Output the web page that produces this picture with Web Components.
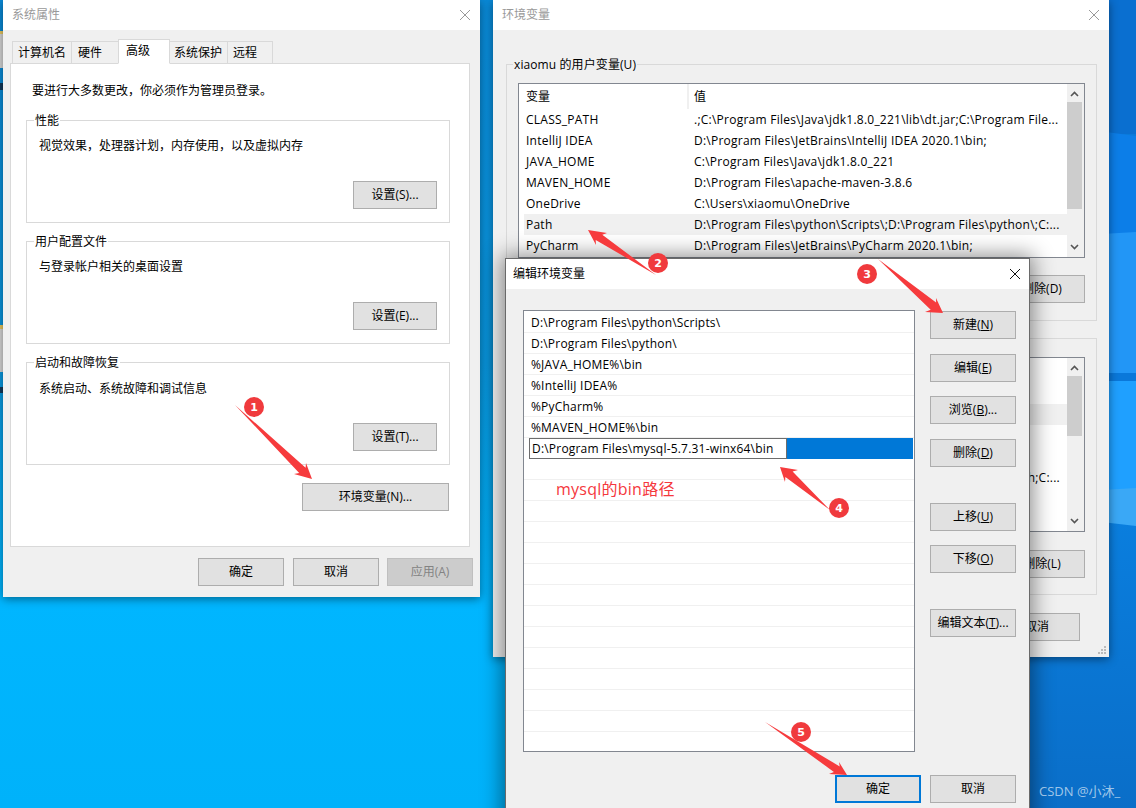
<!DOCTYPE html>
<html lang="zh">
<head>
<meta charset="utf-8">
<title>环境变量</title>
<style>
html,body{margin:0;padding:0;overflow:hidden;width:1136px;height:808px}
body{font:12px/16px "Open Sans","Noto Sans CJK SC",sans-serif;color:#000}
</style>
</head>
<body>
<desk-top>
  <win-dialog x="3" y="0" w="477" h="597" title="系统属性" style="--title:#999">
    <tab-strip></tab-strip>
    <tab-panel>
      <div style="padding:0 0 0 21px;height:16px">要进行大多数更改，你必须作为管理员登录。</div>
      <group-box label="性能" style="--h:103px;--bg:#fff;margin-top:21px;width:424px;margin-left:15px">
        <div class="t">视觉效果，处理器计划，内存使用，以及虚拟内存</div>
        <ui-btn style="--w:84px">设置(S)...</ui-btn>
      </group-box>
      <group-box label="用户配置文件" style="--h:103px;--bg:#fff;margin-top:18px;width:424px;margin-left:15px">
        <div class="t">与登录帐户相关的桌面设置</div>
        <ui-btn style="--w:84px">设置(E)...</ui-btn>
      </group-box>
      <group-box label="启动和故障恢复" style="--h:103px;--bg:#fff;margin-top:18px;width:424px;margin-left:15px">
        <div class="t" style="margin-top:1px">系统启动、系统故障和调试信息</div>
        <ui-btn style="--w:84px">设置(T)...</ui-btn>
      </group-box>
      <btn-row style="margin:18px 20px 0 0"><ui-btn style="--w:147px">环境变量(N)...</ui-btn></btn-row>
    </tab-panel>
    <btn-row style="margin:11px 7px 0 0;gap:9px">
      <ui-btn>确定</ui-btn><ui-btn>取消</ui-btn><ui-btn disabled style="margin-left:-1px">应用(A)</ui-btn>
    </btn-row>
  </win-dialog>

  <win-dialog x="493" y="0" w="616" h="657" title="环境变量" grip style="--title:#999">
    <env-body>
      <group-box label="xiaomu 的用户变量(U)" mode="list" style="--h:257px;--bg:#f0f0f0">
        <var-list thumb-top="18" thumb-h="107" heads>
          <var-row name="CLASS_PATH" value=".;C:\Program Files\Java\jdk1.8.0_221\lib\dt.jar;C:\Program File..."></var-row>
          <var-row name="IntelliJ IDEA" value="D:\Program Files\JetBrains\IntelliJ IDEA 2020.1\bin;"></var-row>
          <var-row name="JAVA_HOME" value="C:\Program Files\Java\jdk1.8.0_221"></var-row>
          <var-row name="MAVEN_HOME" value="D:\Program Files\apache-maven-3.8.6"></var-row>
          <var-row name="OneDrive" value="C:\Users\xiaomu\OneDrive"></var-row>
          <var-row name="Path" value="D:\Program Files\python\Scripts\;D:\Program Files\python\;C:..." hot></var-row>
          <var-row name="PyCharm" value="D:\Program Files\JetBrains\PyCharm 2020.1\bin;"></var-row>
        </var-list>
        <btn-row style="margin-top:17px;gap:9px"><ui-btn></ui-btn><ui-btn></ui-btn><ui-btn>删除(D)</ui-btn></btn-row>
      </group-box>
      <group-box label="" mode="list" style="--h:257px;--bg:#f0f0f0;margin-top:17px">
        <var-list thumb-top="18" thumb-h="60">
          <var-row></var-row>
          <var-row hot></var-row>
          <var-row></var-row>
          <var-row></var-row>
          <var-row value="h;C:..." end></var-row>
          <var-row></var-row>
          <var-row></var-row>
        </var-list>
        <btn-row style="margin-top:18px;gap:9px"><ui-btn></ui-btn><ui-btn></ui-btn><ui-btn>删除(L)</ui-btn></btn-row>
      </group-box>
      <btn-row style="margin:18px 17px 0 0;gap:9px"><ui-btn></ui-btn><ui-btn>取消</ui-btn></btn-row>
    </env-body>
  </win-dialog>

  <win-dialog x="505" y="258" w="525" h="580" title="编辑环境变量" active style="--title:#000">
    <edit-body>
      <path-list>
        <path-row>D:\Program Files\python\Scripts\</path-row>
        <path-row>D:\Program Files\python\</path-row>
        <path-row>%JAVA_HOME%\bin</path-row>
        <path-row>%IntelliJ IDEA%</path-row>
        <path-row>%PyCharm%</path-row>
        <path-row>%MAVEN_HOME%\bin</path-row>
        <path-row editing>D:\Program Files\mysql-5.7.31-winx64\bin</path-row>
        <path-row></path-row><path-row></path-row><path-row></path-row><path-row></path-row>
        <path-row></path-row><path-row></path-row><path-row></path-row><path-row></path-row>
        <path-row></path-row><path-row></path-row><path-row></path-row><path-row></path-row>
        <path-row></path-row><path-row></path-row>
      </path-list>
      <btn-col>
        <ui-btn style="margin-top:1px">新建(<u>N</u>)</ui-btn>
        <ui-btn style="margin-top:15px">编辑(<u>E</u>)</ui-btn>
        <ui-btn style="margin-top:14px">浏览(<u>B</u>)...</ui-btn>
        <ui-btn style="margin-top:15px">删除(<u>D</u>)</ui-btn>
        <ui-btn style="margin-top:36px">上移(<u>U</u>)</ui-btn>
        <ui-btn style="margin-top:14px">下移(<u>O</u>)</ui-btn>
        <ui-btn style="margin-top:36px">编辑文本(<u>T</u>)...</ui-btn>
      </btn-col>
      <btn-row style="grid-column:1 / 3;margin-top:23px;gap:9px"><ui-btn primary>确定</ui-btn><ui-btn>取消</ui-btn></btn-row>
    </edit-body>
  </win-dialog>

  <red-note>mysql的bin路径</red-note>
  <step-mark n="1" tail="235,405" tip="312,479" a="306,463" b="294,474" c="254,407"></step-mark>
  <step-mark n="2" tail="656,275" tip="588,230" a="607,233" b="596,245" c="658,263"></step-mark>
  <step-mark n="3" tail="878,259" tip="943,313" a="936,298" b="925,312" c="867,274"></step-mark>
  <step-mark n="4" tail="830,510" tip="780,467" a="798,470" b="785,482" c="839,508"></step-mark>
  <step-mark n="5" tail="765,722" tip="847,775" a="839,762" b="829,774" c="801,732"></step-mark>
  <water-mark>CSDN @小沐_</water-mark>
</desk-top>

<script>
function def(name, css, html, setup){
  customElements.define(name, class extends HTMLElement{
    connectedCallback(){
      if(this.shadowRoot) return;
      const r=this.attachShadow({mode:'open'});
      const h=typeof html==='function'?html(this):html;
      r.innerHTML='<style>'+css+'</style>'+h;
      if(setup) setup(this,r);
    }
  });
}
const esc=s=>String(s==null?'':s).replace(/&/g,'&amp;').replace(/</g,'&lt;');

def('desk-top',`
:host{display:block;position:relative;width:1136px;height:808px;overflow:hidden;background:#00b4ff}
svg{position:absolute;left:0;top:0}
`,`<svg width="1136" height="808" viewBox="0 0 1136 808">
<defs>
<linearGradient id="l" x1="0" y1="0" x2="0" y2="1"><stop offset="0" stop-color="#0a8ad8"/><stop offset=".45" stop-color="#0a98e0"/><stop offset=".74" stop-color="#00b6ff"/><stop offset="1" stop-color="#00b2fa"/></linearGradient>
<linearGradient id="r" x1="0" y1="0" x2="0" y2="1"><stop offset="0" stop-color="#0a7ede"/><stop offset="1" stop-color="#0a6ec8"/></linearGradient>
</defs>
<rect width="505" height="808" fill="url(#l)"/>
<rect x="505" width="631" height="808" fill="#0a7ad8"/>
<rect x="505" y="520" width="631" height="288" fill="url(#r)"/>
<rect x="1000" y="0" width="136" height="134" fill="#0a6fd0"/>
<polygon points="1000,118 1136,136 1136,234 1000,234" fill="#0c7ee8"/>
<polygon points="1000,240 1136,232 1136,373 1000,373" fill="#2296f6"/>
<rect x="1000" y="373" width="136" height="8" fill="#0a78da"/>
<polygon points="1000,381 1136,381 1136,490 1000,496" fill="#1fa0ff"/>
<polygon points="1000,496 1136,488 1136,526 1000,510" fill="#3aa8f6"/>
<rect x="0" y="31" width="3" height="37" fill="#d8d8d8"/><rect x="0" y="31" width="3" height="3" fill="#e8c860"/>
<rect x="0" y="83" width="3" height="7" fill="#123a5c"/>
<rect x="0" y="325" width="3" height="47" fill="#d8d8d8"/><rect x="0" y="325" width="3" height="4" fill="#e8c860"/>
<rect x="0" y="387" width="3" height="6" fill="#123a5c"/>
</svg><slot></slot>`);

def('win-dialog',`
:host{display:block;position:absolute;background:#f0f0f0;box-shadow:0 2px 9px rgba(0,0,0,.45);box-sizing:border-box;overflow:hidden}
:host([active]){box-shadow:0 0 20px 3px rgba(0,0,0,.45);outline:1px solid #6a6a6a;outline-offset:-1px}
.bar{display:flex;align-items:center;justify-content:space-between;height:30px;background:#fff;padding:0 10px 0 9px;color:var(--title)}
:host([active]) .bar{height:30px;padding-left:7px;margin:1px 1px 0;padding-right:9px}
svg{display:block}
.grip{position:absolute;right:2px;bottom:2px}
`,el=>`<div class="bar"><span>${esc(el.getAttribute('title'))}</span>
<svg width="10" height="10" viewBox="0 0 10 10"><path d="M0 0L10 10M10 0L0 10" stroke="${el.hasAttribute('active')?'#111':'#999'}" stroke-width="1" fill="none"/></svg></div>
<slot></slot>${el.hasAttribute('grip')?'<svg class="grip" width="10" height="10" viewBox="0 0 10 10" fill="#bbb"><rect x="7" y="1" width="2" height="2"/><rect x="4" y="4" width="2" height="2"/><rect x="7" y="4" width="2" height="2"/><rect x="1" y="7" width="2" height="2"/><rect x="4" y="7" width="2" height="2"/><rect x="7" y="7" width="2" height="2"/></svg>':''}`,
el=>{const g=a=>el.getAttribute(a);Object.assign(el.style,{left:g('x')+'px',top:g('y')+'px',width:g('w')+'px',height:g('h')+'px'});el.removeAttribute('title');});

def('tab-strip',`
:host{display:flex;align-items:flex-end;height:25px;margin:9px 0 -1px 9px;position:relative;z-index:1}
.t{box-sizing:border-box;height:23px;border:1px solid #d9d9d9;border-bottom:1px solid #d9d9d9;border-right:0;background:#f0f0f0;display:flex;align-items:center;padding-left:5px}
.t:last-child{border-right:1px solid #d9d9d9}
.a{height:25px;background:#fff;border-bottom-color:#fff;border-right:1px solid #d9d9d9;padding:0 0 2px 7px;margin:0 -1px 0 -2px;position:relative;z-index:1}
`,`<div class="t" style="width:59px">计算机名</div><div class="t" style="width:49px;padding-left:6px">硬件</div><div class="t a" style="width:52px">高级</div><div class="t" style="width:58px;padding-left:4px">系统保护</div><div class="t" style="width:46px">远程</div>`);

def('tab-panel',`
:host{display:block;box-sizing:border-box;width:460px;height:484px;margin-left:7px;background:#fff;border:1px solid #d9d9d9;padding-top:19px}
`,`<slot></slot>`);

def('group-box',`
:host{display:block;position:relative;box-sizing:border-box;height:var(--h);border:1px solid #d9d9d9}
.l{position:absolute;left:7px;top:-8px;background:var(--bg);padding:0 1px}
.l:empty{display:none}
:host([mode=list]) .l{left:6px;letter-spacing:.1px}
.c{box-sizing:border-box;height:100%;display:flex;flex-direction:column;justify-content:space-between;align-items:flex-end;padding:17px 12px 13px 12px}
::slotted(.t){align-self:flex-start}
:host([mode=list]) .c{display:block;padding:18px 11px 0 11px}
`,el=>`<div class="l">${esc(el.getAttribute('label'))}</div><div class="c"><slot></slot></div>`);

def('ui-btn',`
:host{display:inline-flex;align-items:center;justify-content:center;box-sizing:border-box;width:var(--w,86px);height:28px;flex:none;background:#e1e1e1;border:1px solid #adadad;white-space:nowrap}
:host([primary]){border:2px solid #0078d7}
:host([disabled]){background:#ccc;border-color:#bfbfbf;color:#838383}
`,`<slot></slot>`);

def('btn-row',`:host{display:flex;justify-content:flex-end}`,`<slot></slot>`);
def('btn-col',`:host{display:flex;flex-direction:column}`,`<slot></slot>`);
def('env-body',`:host{display:block;padding:34px 12px 0 13px}`,`<slot></slot>`);
def('edit-body',`:host{display:grid;grid-template-columns:392px 86px;column-gap:15px;padding:21px 0 0 18px;align-items:start}`,`<slot></slot>`);

def('var-list',`
:host{display:flex;box-sizing:border-box;height:175px;background:#fff;border:1px solid #828790}
.m{flex:1;min-width:0;padding-left:5px}
.h{display:grid;grid-template-columns:163px 1fr;height:25px;align-items:center}
.h span{padding-left:2px;height:25px;line-height:25px}
.h span+span{border-left:2px solid #f0f0f0;padding-left:5px}
.s{width:17px;flex:none;background:#f0f0f0;position:relative}
.s i{position:absolute;left:0;right:2px;background:#cdcdcd}
.s svg{position:absolute;left:3px}
`,el=>{const hd=el.hasAttribute('heads');return `<div class="m"><div class="h"><span>${hd?'变量':''}</span><span>${hd?'值':''}</span></div><slot></slot></div>
<div class="s"><svg style="top:7px" width="9" height="7" viewBox="0 0 9 7"><path d="M1 5L4.5 1.5L8 5" fill="none" stroke="#555" stroke-width="1.6"/></svg><i style="top:${el.getAttribute('thumb-top')}px;height:${el.getAttribute('thumb-h')}px"></i><svg style="bottom:7px" width="9" height="7" viewBox="0 0 9 7"><path d="M1 2L4.5 5.5L8 2" fill="none" stroke="#555" stroke-width="1.6"/></svg></div>`;});

def('var-row',`
:host{display:grid;grid-template-columns:168px 1fr;height:21px;line-height:21px;white-space:nowrap;overflow:hidden;letter-spacing:.24px}
:host([hot]){background:#f0f0f0}
span{padding-left:2px}
span+span{padding-left:2px;overflow:hidden}
:host([end]) span+span{text-align:right;padding-right:7px}
`,el=>`<span>${esc(el.getAttribute('name'))}</span><span>${esc(el.getAttribute('value'))}</span>`);

def('path-list',`:host{display:block;box-sizing:border-box;height:442px;padding-top:1px;background:#fff;border:1px solid #828790;overflow:hidden}`,`<slot></slot>`);

def('path-row',`
:host{display:block;box-sizing:border-box;height:21px;padding:3px 1px 0 7px;line-height:16px;border-bottom:1px solid #f0f0f0;white-space:nowrap;letter-spacing:.2px}
:host([editing]){background:#0078d7;border-bottom:0;padding:0;margin:0 1px 0 5px}
.e{display:block;box-sizing:border-box;width:258px;height:21px;line-height:19px;background:#fff;border:1px solid #6d6d6d;padding-left:2px}
`,el=>el.hasAttribute('editing')?'<span class="e"><slot></slot></span>':'<slot></slot>');

def('red-note',`:host{position:absolute;left:556px;top:479px;font-size:16px;line-height:20px;color:#f5383d;white-space:nowrap;letter-spacing:.25px}`,`<slot></slot>`);
def('water-mark',`:host{position:absolute;left:1039px;top:783px;font-size:13px;line-height:16px;color:rgba(255,255,255,.62);white-space:nowrap}`,`<slot></slot>`);

def('step-mark',`
:host{position:absolute;left:0;top:0;width:1136px;height:808px;pointer-events:none;display:block}
svg{position:absolute;left:0;top:0}
text{font:bold 11px "DejaVu Sans",sans-serif;fill:#fff;text-anchor:middle}
`,el=>{
  const P=a=>el.getAttribute(a).split(',').map(Number);
  const T=P('tail'),H=P('tip'),A=P('a'),B=P('b'),C=P('c');
  const L=Math.hypot(H[0]-T[0],H[1]-T[1]),u=[(H[0]-T[0])/L,(H[1]-T[1])/L];
  const neck=b=>{const d=(b[0]-T[0])*u[0]+(b[1]-T[1])*u[1];const p=[T[0]+u[0]*d,T[1]+u[1]*d];
    return [p[0]+(b[0]-p[0])*.5+u[0]*3,p[1]+(b[1]-p[1])*.5+u[1]*3];};
  const pts=[T,neck(A),A,H,B,neck(B)].map(p=>p[0].toFixed(1)+','+p[1].toFixed(1)).join(' ');
  return `<svg width="1136" height="808" viewBox="0 0 1136 808"><polygon points="${pts}" fill="#f63b3d"/><circle cx="${C[0]}" cy="${C[1]}" r="10" fill="#f03a3d"/><text x="${C[0]}" y="${C[1]+4}">${el.getAttribute('n')}</text></svg>`;
});
</script>
</body>
</html>
